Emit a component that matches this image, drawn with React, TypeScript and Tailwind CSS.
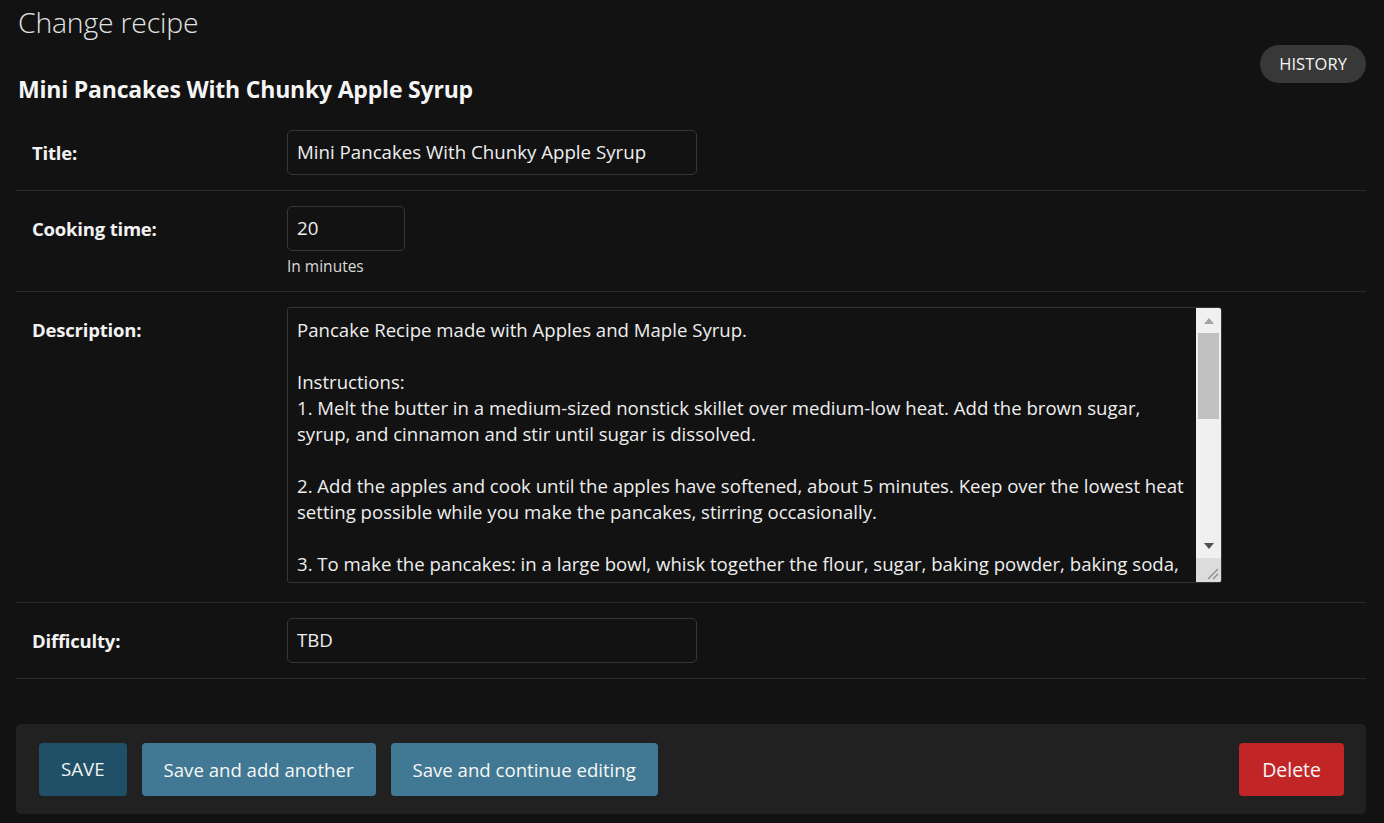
import React from "react";

const lines = [
  "Pancake Recipe made with Apples and Maple Syrup.",
  "",
  "Instructions:",
  "1. Melt the butter in a medium-sized nonstick skillet over medium-low heat. Add the brown sugar,",
  "syrup, and cinnamon and stir until sugar is dissolved.",
  "",
  "2. Add the apples and cook until the apples have softened, about 5 minutes. Keep over the lowest heat",
  "setting possible while you make the pancakes, stirring occasionally.",
  "",
  "3. To make the pancakes: in a large bowl, whisk together the flour, sugar, baking powder, baking soda,",
  "and salt.",
];

function Label({ children }: { children: React.ReactNode }) {
  return (
    <div className="w-[255px] shrink-0 h-[45px] flex items-center font-bold text-[18.5px] text-[#f2f2f2] tracking-[-0.2px]">
      {children}
    </div>
  );
}

function Row({ children }: { children: React.ReactNode }) {
  return <div className="flex items-start px-4 py-[15px] border-b border-[#2a2a2a]">{children}</div>;
}

export default function App() {
  return (
    <div className="min-h-screen bg-[#121212] text-[#eeeeee] font-['Open_Sans',sans-serif] pl-4 pr-[18px] pt-1">
      <h1 className="text-[28.4px] leading-[36px] font-light text-[#e2e2e2] pl-[2px] tracking-[-0.2px]">Change recipe</h1>
      <div className="flex justify-between items-start mt-[5px]">
        <h2 className="mt-[30px] pl-[2px] text-[23px] leading-[28px] font-bold text-[#f5f5f5] tracking-[-0.2px]">
          Mini Pancakes With Chunky Apple Syrup
        </h2>
        <button className="h-[38px] px-[19px] rounded-full bg-[#383838] text-[16.5px] text-[#f5f5f5] uppercase tracking-[0.1px]">
          History
        </button>
      </div>

      <div className="mt-[12px]">
        <Row>
          <Label>Title:</Label>
          <div className="w-[410px] h-[45px] border border-[#363636] rounded-[5px] flex items-center px-[9px] text-[18.7px] text-[#eeeeee]">
            Mini Pancakes With Chunky Apple Syrup
          </div>
        </Row>
        <Row>
          <Label>Cooking time:</Label>
          <div>
            <div className="w-[118px] h-[45px] border border-[#363636] rounded-[5px] flex items-center px-[9px] text-[18.7px]">
              20
            </div>
            <div className="mt-[5px] leading-[20px] text-[15.5px] text-[#dadada]">In minutes</div>
          </div>
        </Row>
        <Row>
          <Label>Description:</Label>
          <div className="mb-[4px] w-[935px] h-[276px] border border-[#363636] rounded-[3px] flex overflow-hidden">
            <div className="flex-1 pl-[9px] pt-[9px] text-[18.6px] leading-[26px] whitespace-pre overflow-hidden text-[#eeeeee]">
              {lines.map((l, i) => (
                <div key={i} className="h-[26px]">
                  {l}
                </div>
              ))}
            </div>
            <div className="w-[25px] shrink-0 bg-[#f0f0f0] flex flex-col">
              <div className="h-[25px] flex items-center justify-center">
                <svg width="10" height="6" viewBox="0 0 10 6">
                  <path d="M5 0 L10 6 L0 6 Z" fill="#a3a3a3" />
                </svg>
              </div>
              <div className="h-[86px] mx-[2px] bg-[#c1c1c1]" />
              <div className="flex-1" />
              <div className="h-[25px] flex items-center justify-center">
                <svg width="10" height="6" viewBox="0 0 10 6">
                  <path d="M0 0 L10 0 L5 6 Z" fill="#505050" />
                </svg>
              </div>
              <div className="h-[24px] bg-[#dcdcdc] flex items-end justify-end p-[2px]">
                <svg width="14" height="14" viewBox="0 0 14 14">
                  <path d="M13 3 L3 13 M13 8 L8 13" stroke="#8a8a8a" strokeWidth="1.2" />
                </svg>
              </div>
            </div>
          </div>
        </Row>
        <Row>
          <Label>Difficulty:</Label>
          <div className="w-[410px] h-[45px] border border-[#363636] rounded-[5px] flex items-center px-[9px] text-[18.7px]">
            TBD
          </div>
        </Row>
      </div>

      <div className="mt-[45px] bg-[#212121] rounded-[5px] pl-[23px] pr-[22px] pt-[19px] pb-[18px] flex items-center">
        <button className="h-[53px] px-[22px] rounded-[4px] bg-[#205067] text-[18.7px] text-[#f2f2f2]">SAVE</button>
        <button className="ml-[15px] h-[53px] px-[22px] rounded-[4px] bg-[#417893] text-[18.6px] text-[#f7f7f7]">
          Save and add another
        </button>
        <button className="ml-[15px] h-[53px] px-[22px] rounded-[4px] bg-[#417893] text-[18.6px] text-[#f7f7f7]">
          Save and continue editing
        </button>
        <div className="flex-1" />
        <button className="h-[53px] px-[23px] rounded-[4px] bg-[#c22525] text-[19.5px] text-[#f7f7f7]">Delete</button>
      </div>
    </div>
  );
}
